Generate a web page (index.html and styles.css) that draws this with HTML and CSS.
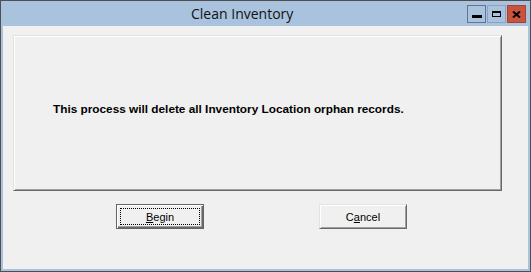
FILE: index.html
```html
<!DOCTYPE html>
<html lang="en">
<head>
    <meta charset="UTF-8">
    <title>Clean Inventory</title>
    <link rel="stylesheet" href="styles.css">
</head>
<body>
    <div class="window">
        <!-- Title bar -->
        <div class="titlebar">
            <span class="title">Clean Inventory</span>
            <div class="caption-buttons">
                <span class="cap-btn cap-min"><span class="glyph-min"></span></span>
                <span class="cap-btn cap-max"><span class="glyph-max"></span></span>
                <span class="cap-btn cap-close">
                    <svg width="9" height="7" viewBox="0 0 9 7">
                        <path d="M1 0.5 L8 6.5 M8 0.5 L1 6.5" stroke="#000" stroke-width="2" fill="none"/>
                    </svg>
                </span>
            </div>
        </div>

        <!-- Client area -->
        <div class="client">
            <div class="panel">
                <p class="message">This process will delete all Inventory Location orphan records.</p>
            </div>
            <div class="button-row">
                <button class="btn btn-default"><span class="focus"><u>B</u>egin</span></button>
                <button class="btn">C<u>a</u>ncel</button>
            </div>
        </div>
    </div>
</body>
</html>
```

FILE: styles.css
```css
body {
    margin: 0;
    padding: 0;
    font-family: 'Liberation Sans', Arial, sans-serif;
}

.window {
    width: 531px;
    height: 272px;
    box-sizing: border-box;
    border: 1px solid #4f4f4f;
    background-color: #a9c2dd;
    padding: 0 2px 2px 2px;
    display: flex;
    flex-direction: column;
}

/* Title bar */
.titlebar {
    height: 25px;
    position: relative;
    display: flex;
    align-items: center;
}

.title {
    font-family: 'Open Sans', 'Noto Sans', sans-serif;
    font-size: 14px;
    color: #111;
    margin-left: 188px;
    margin-top: -1px;
}

.caption-buttons {
    position: absolute;
    right: 2px;
    top: 4px;
    display: flex;
    gap: 1px;
}

.cap-btn {
    width: 19px;
    height: 18px;
    box-sizing: border-box;
    border: 1px solid #5f7590;
    display: flex;
    align-items: center;
    justify-content: center;
}

.cap-max {
    border-color: #8aa3c0;
}

.cap-close {
    background-color: #c9533d;
    border-color: #a8412f;
}

.glyph-min {
    width: 10px;
    height: 3px;
    background: #000;
    margin-top: 4px;
}

.glyph-max {
    width: 9px;
    height: 6px;
    box-sizing: border-box;
    border: 1px solid #000;
    border-top-width: 2px;
    margin-top: -1px;
}

.cap-close svg {
    display: block;
}

/* Client area */
.client {
    flex: 1;
    background-color: #f0f0f0;
    display: flex;
    flex-direction: column;
}

.panel {
    margin: 9px 26px 0 10px;
    height: 156px;
    box-sizing: border-box;
    border-top: 1px solid #e3e3e3;
    border-left: 1px solid #e3e3e3;
    border-right: 1px solid #696969;
    border-bottom: 1px solid #696969;
    box-shadow: inset 1px 1px #fff, inset -1px -1px #a0a0a0;
    padding: 0 0 0 39px;
    display: flex;
    align-items: center;
}

.message {
    margin: -9px 0 0 0;
    font-size: 11.8px;
    font-weight: bold;
    color: #000;
}

.button-row {
    display: flex;
    margin-top: 13px;
    padding-left: 113px;
    gap: 115px;
}

.btn {
    width: 88px;
    height: 25px;
    box-sizing: border-box;
    padding: 0;
    font-family: 'Liberation Sans', Arial, sans-serif;
    font-size: 11px;
    color: #000;
    background-color: #f0f0f0;
    border-top: 1px solid #e3e3e3;
    border-left: 1px solid #e3e3e3;
    border-right: 1px solid #696969;
    border-bottom: 1px solid #696969;
    box-shadow: inset 1px 1px #fff, inset -1px -1px #a0a0a0;
}

.btn-default {
    border: 1px solid #646464;
    box-shadow: inset 1px 1px #fff, inset -1px -1px #696969, inset -2px -2px #a0a0a0;
    padding: 3px;
}

.btn-default .focus {
    display: flex;
    align-items: center;
    justify-content: center;
    height: 100%;
    box-sizing: border-box;
    border: 1px dotted #000;
}
```
